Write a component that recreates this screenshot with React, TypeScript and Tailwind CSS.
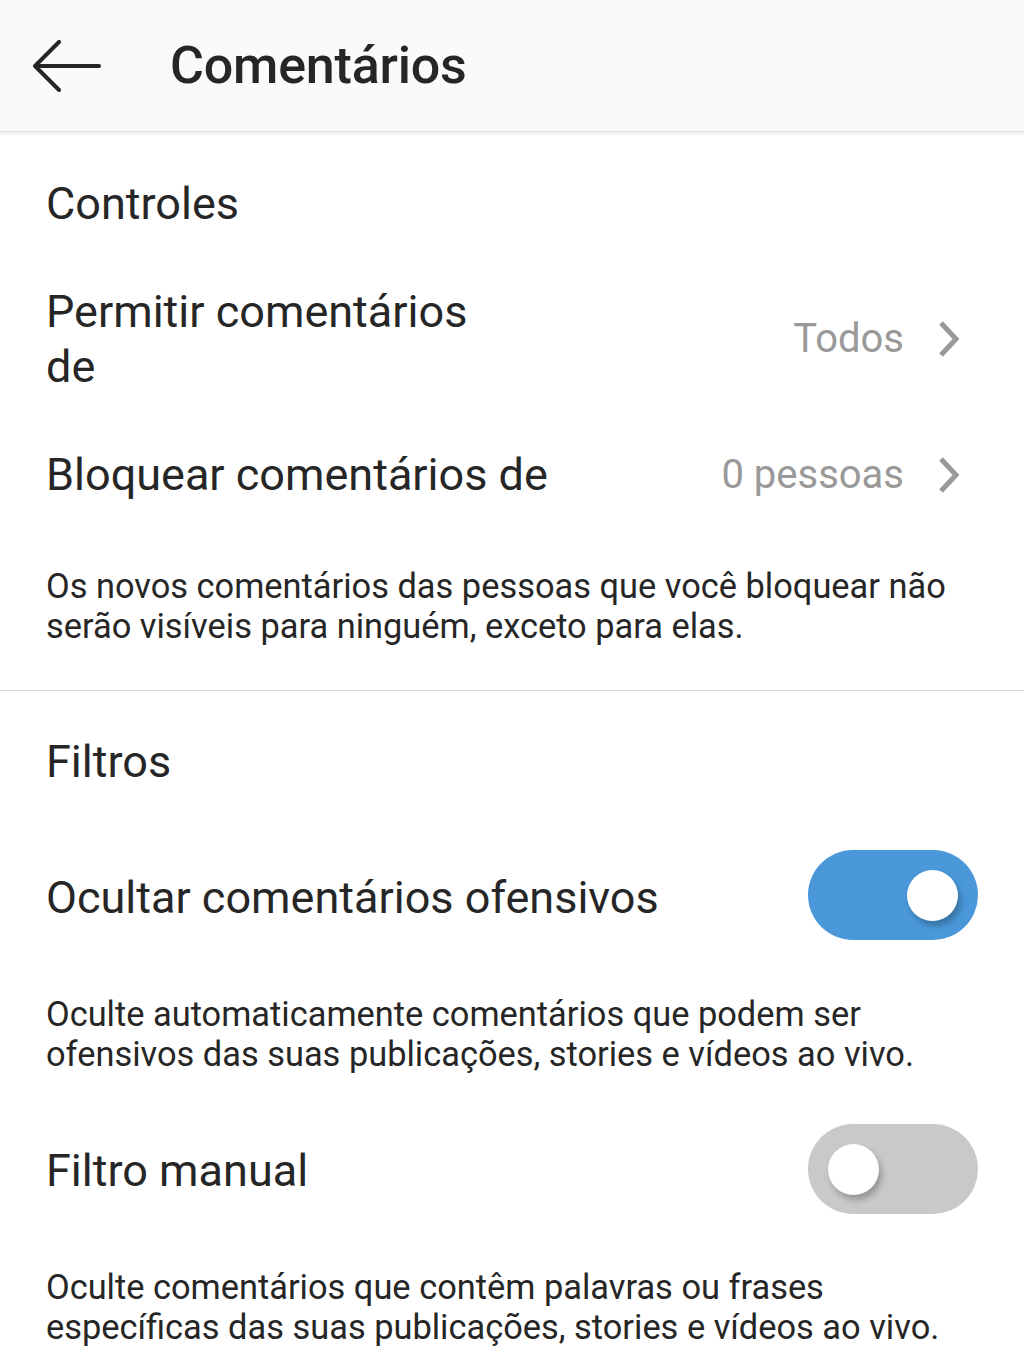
import React from "react";

function Chevron() {
  return (
    <svg width="26" height="40" viewBox="0 0 26 40" className="ml-[32px]">
      <path d="M5 4 L20 20 L5 36" fill="none" stroke="#999999" strokeWidth="5" strokeLinejoin="miter" />
    </svg>
  );
}

function Toggle({ on }: { on: boolean }) {
  return (
    <div
      className={
        "relative w-[170px] h-[90px] rounded-full shrink-0 " +
        (on ? "bg-[#4a98da]" : "bg-[#c8c9cb]")
      }
    >
      <div
        className={
          "absolute top-[20px] w-[51px] h-[51px] rounded-full bg-white shadow-[3px_5px_6px_rgba(0,0,0,0.25)] " +
          (on ? "left-[99px]" : "left-[20px]")
        }
      />
    </div>
  );
}

export default function App() {
  return (
    <div
      className="w-[1024px] h-[1365px] bg-white overflow-hidden text-[#262626]"
      style={{ fontFamily: "Roboto, 'Noto Sans', sans-serif" }}
    >
      <header className="h-[132px] bg-[#fafafa] flex items-center border-b border-[#dcdcdc] shadow-[0_2px_3px_rgba(0,0,0,0.08)] relative z-10">
        <svg width="70" height="52" viewBox="0 0 70 52" className="ml-[32px]">
          <path
            d="M3 26 H67 M27 2 L3 26 L27 50"
            fill="none"
            stroke="#262626"
            strokeWidth="4"
            strokeLinecap="round"
            strokeLinejoin="round"
          />
        </svg>
        <h1 className="ml-[68px] text-[52px] font-medium tracking-[-0.2px] leading-none">Comentários</h1>
      </header>

      <main>
        <div className="h-[143px] flex items-center pl-[46px] text-[45px]">Controles</div>

        <div className="h-[128px] flex items-center justify-between pl-[46px] pr-[62px]">
          <div className="text-[45px] leading-[55px] w-[470px]">Permitir comentários de</div>
          <div className="flex items-center">
            <span className="text-[40px] text-[#999999]">Todos</span>
            <Chevron />
          </div>
        </div>

        <div className="h-[144px] flex items-center justify-between pl-[46px] pr-[62px]">
          <div className="text-[45px]">Bloquear comentários de</div>
          <div className="flex items-center">
            <span className="text-[40px] text-[#999999]">0 pessoas</span>
            <Chevron />
          </div>
        </div>

        <div className="pt-[19px] pb-[44px] pl-[46px] pr-[20px] text-[34.4px] leading-[40px]">
          Os novos comentários das pessoas que você bloquear não serão visíveis para ninguém, exceto para elas.
        </div>

        <div className="h-px bg-[#dbdbdb]" />

        <div className="h-[142px] flex items-center pl-[46px] text-[45px]">Filtros</div>

        <div className="pt-[17px] flex items-center justify-between pl-[46px] pr-[46px]">
          <div className="text-[45px] pt-[6px]">Ocultar comentários ofensivos</div>
          <Toggle on={true} />
        </div>

        <div className="pt-[54px] pl-[46px] pr-[20px] text-[34.4px] leading-[40px]">
          Oculte automaticamente comentários que podem ser ofensivos das suas publicações, stories e vídeos ao vivo.
        </div>

        <div className="pt-[50px] flex items-center justify-between pl-[46px] pr-[46px]">
          <div className="text-[45px] pt-[4px]">Filtro manual</div>
          <Toggle on={false} />
        </div>

        <div className="pt-[53px] pl-[46px] pr-[20px] text-[34.4px] leading-[40px]">
          Oculte comentários que contêm palavras ou frases específicas das suas publicações, stories e vídeos ao vivo.
        </div>
      </main>
    </div>
  );
}
